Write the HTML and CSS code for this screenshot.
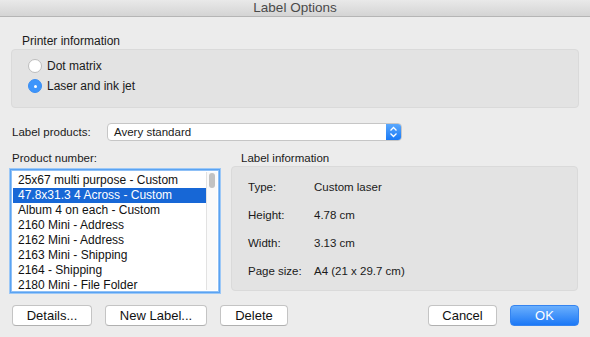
FILE: index.html
```html
<!DOCTYPE html>
<html lang="en">
<head>
    <meta charset="UTF-8">
    <meta name="viewport" content="width=device-width, initial-scale=1.0">
    <title>Label Options</title>
    <link rel="stylesheet" href="styles.css">
</head>
<body>
<div id="dialog">
    <div class="titlebar">Label Options</div>

    <div class="content">
        <div class="group-title printer-title">Printer information</div>
        <div class="group printer-box">
            <label class="radio-row"><span class="radio"></span>Dot matrix</label>
            <label class="radio-row"><span class="radio checked"></span>Laser and ink jet</label>
        </div>

        <div class="products-row">
            <span class="products-label">Label products:</span>
            <div class="popup">
                <span class="popup-text">Avery standard</span>
                <span class="popup-arrows">
                    <svg width="9" height="12" viewBox="0 0 9 12">
                        <path d="M1.5 4.5 L4.5 1.5 L7.5 4.5 M1.5 7.5 L4.5 10.5 L7.5 7.5" fill="none" stroke="#fff" stroke-width="1.3"/>
                    </svg>
                </span>
            </div>
        </div>

        <div class="columns">
            <div class="left-col">
                <div class="group-title">Product number:</div>
                <div class="listbox">
                    <div class="list-rows">
                        <div class="list-row">25x67 multi purpose - Custom</div>
                        <div class="list-row selected">47.8x31.3 4 Across - Custom</div>
                        <div class="list-row">Album 4 on each - Custom</div>
                        <div class="list-row">2160 Mini - Address</div>
                        <div class="list-row">2162 Mini - Address</div>
                        <div class="list-row">2163 Mini - Shipping</div>
                        <div class="list-row">2164 - Shipping</div>
                        <div class="list-row">2180 Mini - File Folder</div>
                    </div>
                    <div class="scrollbar"><div class="thumb"></div></div>
                </div>
            </div>

            <div class="right-col">
                <div class="group-title info-title">Label information</div>
                <div class="group info-box">
                    <div class="info-row"><span class="info-key">Type:</span><span>Custom laser</span></div>
                    <div class="info-row"><span class="info-key">Height:</span><span>4.78 cm</span></div>
                    <div class="info-row"><span class="info-key">Width:</span><span>3.13 cm</span></div>
                    <div class="info-row"><span class="info-key">Page size:</span><span>A4 (21 x 29.7 cm)</span></div>
                </div>
            </div>
        </div>

        <div class="buttons">
            <button class="btn w-details">Details...</button>
            <button class="btn w-new">New Label...</button>
            <button class="btn w-delete">Delete</button>
            <span class="spacer"></span>
            <button class="btn w-cancel">Cancel</button>
            <button class="btn primary w-ok">OK</button>
        </div>
    </div>
</div>
</body>
</html>
```

FILE: styles.css
```css
*{
    margin: 0;
    padding: 0;
    box-sizing: border-box;
}

body{
    width: 590px;
    height: 337px;
    background-color: #ececec;
    font-family: "Liberation Sans", Arial, sans-serif;
    font-size: 12px;
    color: #1a1a1a;
    overflow: hidden;
}

.titlebar{
    height: 17px;
    line-height: 15px;
    text-align: center;
    font-size: 13.5px;
    color: #4a4a4a;
    background: linear-gradient(#e9e9e9, #d4d4d4);
    border-bottom: 1px solid #b5b5b5;
}

.content{
    padding: 0 10px 0 10px;
}

.group-title{
    height: 14px;
    line-height: 14px;
    font-size: 11.5px;
}

.printer-title{
    margin-top: 17px;
    padding-left: 12px;
    font-size: 12px;
}

.group{
    background-color: #e3e3e3;
    border: 1px solid #dadada;
    border-radius: 4px;
}

.printer-box{
    margin: 1px 0 0 1px;
    width: 568px;
    height: 59px;
    padding: 6px 0 0 16px;
}

.radio-row{
    display: flex;
    align-items: center;
    height: 20px;
    font-size: 12px;
}

.radio{
    width: 14px;
    height: 14px;
    border-radius: 50%;
    background: #fff;
    border: 1px solid #bdbdbd;
    margin-right: 5px;
    position: relative;
}

.radio.checked{
    background: #3d95fb;
    border-color: #3a8ef3;
}

.radio.checked::after{
    content: "";
    position: absolute;
    left: 4.5px;
    top: 4.5px;
    width: 3px;
    height: 3px;
    border-radius: 50%;
    background: #fff;
}

.products-row{
    display: flex;
    align-items: center;
    margin-top: 15px;
    height: 18px;
    padding-left: 2px;
}

.products-label{
    width: 95px;
    font-size: 11.5px;
}

.popup{
    display: flex;
    width: 295px;
    height: 18px;
    background: #fff;
    border: 1px solid #c6c6c6;
    border-radius: 4px;
    overflow: hidden;
}

.popup-text{
    flex: 1;
    line-height: 16px;
    padding-left: 6px;
    font-size: 11.5px;
}

.popup-arrows{
    width: 15px;
    display: flex;
    align-items: center;
    justify-content: center;
    background: linear-gradient(#5aa8fd, #1a7af6);
}

.columns{
    display: flex;
    gap: 11px;
    margin-top: 10px;
}

.left-col{
    width: 210px;
}

.left-col .group-title{
    padding-left: 2px;
}

.info-title{
    padding-left: 10px;
}

.listbox{
    display: flex;
    margin-top: 4px;
    height: 124px;
    background: #fff;
    border: 1px solid #5aa3f2;
    box-shadow: 0 0 0 1px #9cc8f7, inset 0 0 0 1px #8fc0f6;
    padding: 2px 2px 2px 2px;
}

.list-rows{
    flex: 1;
    padding-top: 1px;
}

.list-row{
    height: 15px;
    line-height: 15px;
    padding-left: 5px;
    white-space: nowrap;
    color: #111;
}

.list-row.selected{
    background: #1767d6;
    color: #fff;
}

.scrollbar{
    width: 11px;
    border-left: 1px solid #e2e2e2;
    background: #fafafa;
    padding: 1px 2px;
}

.thumb{
    width: 6px;
    height: 15px;
    border-radius: 3px;
    background: #c2c2c2;
}

.right-col{
    width: 347px;
}

.info-box{
    margin-top: 1px;
    height: 125px;
    padding: 9px 0 0 16px;
}

.info-row{
    display: flex;
    height: 28px;
    line-height: 22px;
    font-size: 11.5px;
}

.info-key{
    width: 66px;
}

.buttons{
    display: flex;
    gap: 13px;
    margin-top: 12px;
    padding-left: 2px;
    width: 569px;
}

.spacer{
    flex: 1;
}

.btn{
    height: 21px;
    background: #fff;
    border: 1px solid #c4c4c4;
    border-bottom-color: #b0b0b0;
    border-radius: 4px;
    font-family: "Liberation Sans", Arial, sans-serif;
    font-size: 13px;
    color: #111;
}

.btn.primary{
    background: linear-gradient(#6aaffd, #1c78f6);
    border-color: #3584f0;
    color: #fff;
}

.w-details{ width: 80px; }
.w-new{ width: 102px; }
.w-delete{ width: 68px; }
.w-cancel{ width: 69px; }
.w-ok{ width: 69px; }
```
